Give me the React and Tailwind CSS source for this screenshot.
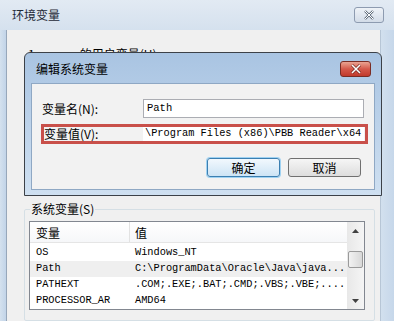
import React from 'react';

const cjk = { fontFamily: '"Noto Sans CJK SC", "Liberation Sans", sans-serif' };
const mono = { fontFamily: '"Liberation Mono", "Noto Sans CJK SC", monospace' };

const rows = [
  { name: 'OS', value: 'Windows_NT', bg: 'bg-white' },
  { name: 'Path', value: 'C:\\ProgramData\\Oracle\\Java\\java...', bg: 'bg-[#efefef]' },
  { name: 'PATHEXT', value: '.COM;.EXE;.BAT;.CMD;.VBS;.VBE;....', bg: 'bg-white' },
  { name: 'PROCESSOR_AR', value: 'AMD64', bg: 'bg-white' },
];

const CloseGray = () => (
  <div className="w-[30px] h-[16px] border border-[#8d9bb0] rounded-[3px] bg-gradient-to-b from-[#eef2f7] to-[#d3dce8] flex items-center justify-center">
    <svg width="12" height="10" viewBox="0 0 12 10">
      <path d="M2 1 L10 9 M10 1 L2 9" stroke="#5f6b7a" strokeWidth="2.4" />
      <path d="M2 1 L10 9 M10 1 L2 9" stroke="#ffffff" strokeWidth="1" />
    </svg>
  </div>
);

const CloseRed = () => (
  <div className="w-[31px] h-[16px] border border-[#7a2c24] rounded-[3px] bg-gradient-to-b from-[#e9a393] via-[#d4584a] to-[#c13a2c] flex items-center justify-center">
    <svg width="12" height="10" viewBox="0 0 12 10">
      <path d="M2 1 L10 9 M10 1 L2 9" stroke="#6b2018" strokeWidth="2.8" />
      <path d="M2 1 L10 9 M10 1 L2 9" stroke="#ffffff" strokeWidth="1.6" />
    </svg>
  </div>
);

const EditDialog = () => (
  <div className="absolute left-[24px] top-[52px] w-[358px] h-[144px] border border-[#3c4148] rounded-t-[6px] bg-gradient-to-b from-[#a9c4e2] to-[#cfe0f1] flex flex-col">
    {/* title bar */}
    <div className="h-[30px] flex items-center justify-between pl-[11px] pr-[10px] pt-[2px]">
      <span className="text-[12px] text-black" style={cjk}>编辑系统变量</span>
      <CloseRed />
    </div>
    {/* body */}
    <div className="flex-1 mx-[6px] mb-[5px] bg-[#f2f2f2] border border-[#8fa8c4] flex flex-col pt-[15px]">
      <div className="flex items-center h-[19px]">
        <span className="w-[111px] pl-[10px] text-[12px] text-black" style={cjk}>变量名(N):</span>
        <div className="w-[221px] h-[19px] bg-white border border-[#abadb3] flex items-center pl-[3px]">
          <span className="text-[10.5px] text-black" style={mono}>Path</span>
        </div>
      </div>
      <div className="mt-[6px] ml-[9px] w-[327px] h-[20px] border-[3px] border-[#c9504a] flex items-center">
        <span className="w-[99px] text-[12px] text-black leading-none" style={cjk}>变量值(V):</span>
        <div className="w-[221px] h-[14px] bg-white flex items-center pl-[2px] overflow-hidden">
          <span className="text-[10.3px] text-black whitespace-nowrap" style={mono}>\Program Files (x86)\PBB Reader\x64</span>
        </div>
      </div>
      <div className="mt-[14px] flex justify-end gap-[8px] pr-[13px]">
        <div className="w-[73px] h-[19px] rounded-[3px] border border-[#3c7fb1] shadow-[0_0_0_1px_#9fd2f2] bg-gradient-to-b from-[#f2f8fd] to-[#cde4f5] flex items-center justify-center">
          <span className="text-[12px] text-black" style={cjk}>确定</span>
        </div>
        <div className="w-[73px] h-[19px] rounded-[3px] border border-[#707070] bg-gradient-to-b from-[#f6f6f6] to-[#dddddd] flex items-center justify-center">
          <span className="text-[12px] text-black" style={cjk}>取消</span>
        </div>
      </div>
    </div>
  </div>
);

const App = () => {
  return (
    <div className="relative w-[394px] h-[321px] overflow-hidden bg-gradient-to-b from-[#d6e2ef] to-[#c9d9ea]">
      {/* outer title bar */}
      <div className="h-[30px] flex items-center justify-between pl-[12px] pr-[10px] bg-gradient-to-b from-[#e2eaf3] to-[#d5e1ee]">
        <span className="text-[12px] text-[#1e2a38]" style={cjk}>环境变量</span>
        <CloseGray />
      </div>
      {/* outer body */}
      <div className="flex h-[291px]">
        <div className="w-[7px] bg-gradient-to-r from-[#d4e1ee] to-[#c2d4e8] border-r border-[#97a7ba]" />
        <div className="w-[373px] bg-[#f0f0f0] pt-[15px] flex flex-col">
          <div className="flex text-[12px] text-black h-[16px]" style={cjk}>
            <span className="ml-[21px]">1</span>
            <span className="ml-[45px]">的用户变量(U)</span>
          </div>
          <div className="h-[152px]" />
          {/* system variables group */}
          <fieldset className="ml-[17px] w-[351px] border border-[#d5dfe5] rounded-[2px] px-[4px] pb-[10px]">
            <legend className="ml-[1px] px-[1px] text-[12px] text-black leading-[14px]" style={cjk}>系统变量(S)</legend>
            <div className="mt-[5px] w-[336px] h-[89px] border border-[#828790] bg-white flex overflow-hidden">
              <div className="flex-1 flex flex-col">
                <div className="h-[24px] flex items-center border-b border-[#e5e5e5] bg-gradient-to-b from-white to-[#f6f7f9]">
                  <span className="w-[100px] pl-[6px] pt-[2px] text-[12px] text-black border-r border-[#e2e2e2] h-full flex items-center" style={cjk}>变量</span>
                  <span className="pl-[5px] pt-[2px] text-[12px] text-black" style={cjk}>值</span>
                </div>
                <div className="pt-[2px]">
                  {rows.map((r) => (
                    <div key={r.name} className={`h-[16px] flex items-center ${r.bg}`}>
                      <span className="w-[100px] pl-[6px] text-[10.3px] text-black whitespace-nowrap" style={mono}>{r.name}</span>
                      <span className="pl-[5px] text-[10.3px] text-black whitespace-nowrap" style={mono}>{r.value}</span>
                    </div>
                  ))}
                </div>
              </div>
              {/* scrollbar */}
              <div className="w-[17px] bg-gradient-to-r from-[#e8e8e8] to-[#f5f5f5] flex flex-col items-center">
                <div className="h-[17px] flex items-center justify-center">
                  <svg width="7" height="4" viewBox="0 0 7 4"><path d="M0 4 L3.5 0 L7 4 Z" fill="#404040" /></svg>
                </div>
                <div className="mt-[12px] w-[15px] h-[17px] rounded-[2px] border border-[#9a9a9a] bg-gradient-to-r from-[#f2f2f2] to-[#d8d8d8]" />
                <div className="flex-1" />
                <div className="h-[17px] flex items-center justify-center">
                  <svg width="7" height="4" viewBox="0 0 7 4"><path d="M0 0 L3.5 4 L7 0 Z" fill="#404040" /></svg>
                </div>
              </div>
            </div>
          </fieldset>
        </div>
        <div className="flex-1 border-l border-[#b7c6d6] bg-gradient-to-r from-[#d2e0ee] to-[#c6d7ea]" />
      </div>
      <EditDialog />
    </div>
  );
};

export default App;
